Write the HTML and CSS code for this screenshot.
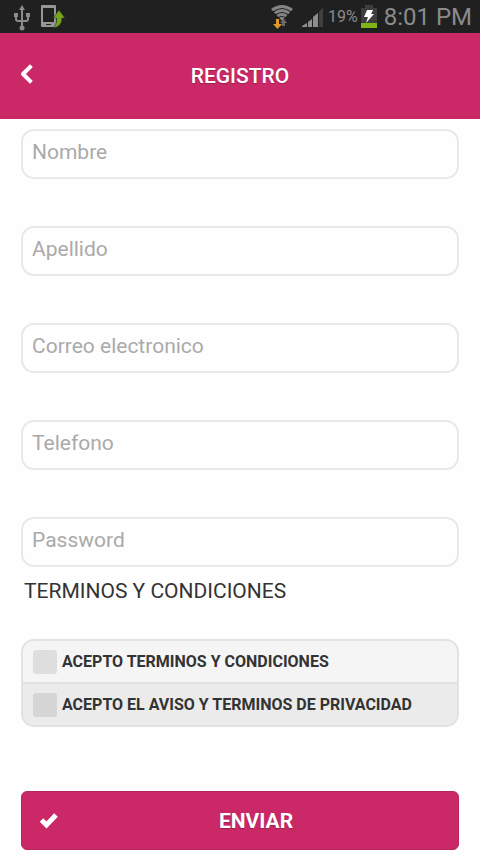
FILE: index.html
```html
<!DOCTYPE html>
<html lang="es">
<head>
<meta charset="utf-8">
<meta name="viewport" content="width=device-width, initial-scale=1">
<title>Registro</title>
<link rel="stylesheet" href="styles.css">
</head>
<body>
<div class="status">
  <div class="status-group status-left">
    <svg width="18" height="28" viewBox="0 0 18 28" aria-hidden="true">
      <g fill="none" stroke="#8b8b8b" stroke-width="2">
        <path d="M9 6v18M3 12v4q0 2 2 2h4M15 12v4q0 2-2 2H9"/>
      </g>
      <path d="M9 2l3 5H6zM1 10h4v4H1zM13 10h4v4h-4z" fill="#8b8b8b"/>
      <circle cx="9" cy="25" r="2.500" fill="#8b8b8b"/>
    </svg>
    <svg width="25" height="26" viewBox="0 0 25 26" aria-hidden="true">
      <path fill="#969696" fill-rule="evenodd" d="M2 1h13q1 0 1 1v20q0 1-1 1H2q-1 0-1-1V2q0-1 1-1zM3 4v14h11V4zM6 20v1h5v-1z"/>
      <path fill="#76a51d" stroke="#202020" stroke-width=".5" d="M19 6l6 8h-3q0 9-9 10 4-3 3.500-10H13z"/>
    </svg>
  </div>
  <div class="status-group">
    <svg width="24" height="26" viewBox="0 0 24 26" aria-hidden="true">
      <path d="M12 17L1 5q11-8 22 0z" fill="#858585"/>
      <g fill="none" stroke="#202020" stroke-width="1.200">
        <path d="M3 8q9-7 18 0M5.500 11q6.500-5 13 0M8 14q4-3 8 0"/>
      </g>
      <path d="M6 15h3v5h3l-4.500 5L3 20h3z" fill="#e39a2b"/>
      <path d="M12 22v-3h-2l4-4 3 4h-2v3z" fill="#6b6b6b"/>
    </svg>
    <svg class="signal" width="22" height="22" viewBox="0 0 22 22" aria-hidden="true">
      <path d="M0 21v-1l5-3v4zM6 21v-5l4-3v8zM11 21V11l5-4v14z" fill="#8e8e8e"/>
      <path d="M17 21V6l4-5v20z" fill="#3f3f3f"/>
    </svg>
    <span class="percent">19%</span>
    <svg class="battery" width="16" height="24" viewBox="0 0 16 24" aria-hidden="true">
      <path d="M4 0h8v3h4v15H0V3h4z" fill="#3e3e3e"/>
      <path d="M0 18h16v5H0z" fill="#80b515"/>
      <path d="M6 5h6l-2 4h3l-8 9 2-6H3z" fill="#fff"/>
    </svg>
    <span class="clock">8:01 PM</span>
  </div>
</div>

<header class="header">
  <a class="back" href="#" aria-label="Regresar">
    <svg width="14" height="20" viewBox="0 0 14 20" aria-hidden="true">
      <path d="M11 3L4 10l7 7" fill="none" stroke="#fff" stroke-width="4" stroke-linecap="square" stroke-linejoin="round"/>
    </svg>
  </a>
  <h1 class="title">REGISTRO</h1>
</header>

<form class="form">
  <div class="fields">
    <input class="field" type="text" placeholder="Nombre" aria-label="Nombre">
    <input class="field" type="text" placeholder="Apellido" aria-label="Apellido">
    <input class="field" type="email" placeholder="Correo electronico" aria-label="Correo electronico">
    <input class="field" type="tel" placeholder="Telefono" aria-label="Telefono">
    <input class="field" type="password" placeholder="Password" aria-label="Password">
  </div>
  <h2 class="terms">TERMINOS Y CONDICIONES</h2>
  <div class="options">
    <label class="option"><input class="tick" type="checkbox">ACEPTO TERMINOS Y CONDICIONES</label>
    <label class="option option-alt"><input class="tick" type="checkbox">ACEPTO EL AVISO Y TERMINOS DE PRIVACIDAD</label>
  </div>
  <button class="submit" type="submit">
    <svg width="20" height="18" viewBox="0 0 20 18" aria-hidden="true">
      <path d="M2.500 8l5 5L17 3" fill="none" stroke="#fff" stroke-width="5"/>
    </svg>
    ENVIAR
  </button>
</form>
</body>
</html>
```
FILE: styles.css
```css
* {
  box-sizing: border-box;
}

body {
  margin: 0;
  background: #fefefe;
  color: #333;
  font-family: Roboto, "Liberation Sans", sans-serif;
}

.status {
  display: flex;
  justify-content: space-between;
  align-items: center;
  height: 33px;
  padding: 0 8px 0 13px;
  background: #202020;
  color: #8b8b8b;
}

.status-group {
  display: flex;
  align-items: center;
}

.status-left {
  gap: 9px;
}

.signal {
  margin: 0 4px 0 8px;
}

.battery {
  margin: 0 7px 0 3px;
}

.percent {
  font-size: 16px;
}

.clock {
  font-size: 24px;
}

.header {
  display: grid;
  grid-template-columns: 48px 1fr 48px;
  align-items: center;
  height: 86px;
  background: #cb2868;
  color: #fff;
}

.back {
  display: flex;
  padding-left: 19px;
  padding-bottom: 4px;
}

.title {
  margin: 0;
  font-size: 21px;
  font-weight: 500;
  line-height: 24px;
  text-align: center;
  text-shadow: 0 1px 1px #99204f;
}

.form {
  padding: 10px 21px 4px;
}

.fields {
  display: grid;
  gap: 47px;
}

.field {
  width: 100%;
  height: 50px;
  padding: 0 9px 5px;
  border: 2px solid #e8e8e8;
  border-radius: 13px;
  background: #fefefe;
  color: #333;
  font: 400 21px/24px Roboto, "Liberation Sans", sans-serif;
}

.field::placeholder {
  color: #aaa;
  opacity: 1;
}

.terms {
  margin: 12px 3px 36px;
  font-size: 21px;
  font-weight: 400;
  line-height: 24px;
}

.options {
  overflow: hidden;
  border: 2px solid #e2e2e2;
  border-radius: 13px;
  background: #f5f5f5;
}

.option {
  display: flex;
  align-items: center;
  gap: 5px;
  height: 41px;
  padding-left: 10px;
  font-size: 16px;
  font-weight: 700;
}

.option-alt {
  height: 43px;
  border-top: 2px solid #e0e0e0;
  background: #ebebeb;
}

.tick {
  appearance: none;
  width: 24px;
  height: 24px;
  margin: 0;
  border-radius: 3px;
  background: #dedede;
}

.option-alt .tick {
  background: #d6d6d6;
}

.tick:checked {
  background: #cb2868;
}

.submit {
  display: grid;
  grid-template-columns: 32px 1fr;
  align-items: center;
  width: 100%;
  height: 59px;
  margin-top: 64px;
  padding: 0 17px;
  border: 1px solid #b92560;
  border-radius: 6px;
  background: #cb2868;
  color: #fff;
  font: 700 21px/24px Roboto, "Liberation Sans", sans-serif;
  text-shadow: 0 1px 1px #99204f;
}
```
